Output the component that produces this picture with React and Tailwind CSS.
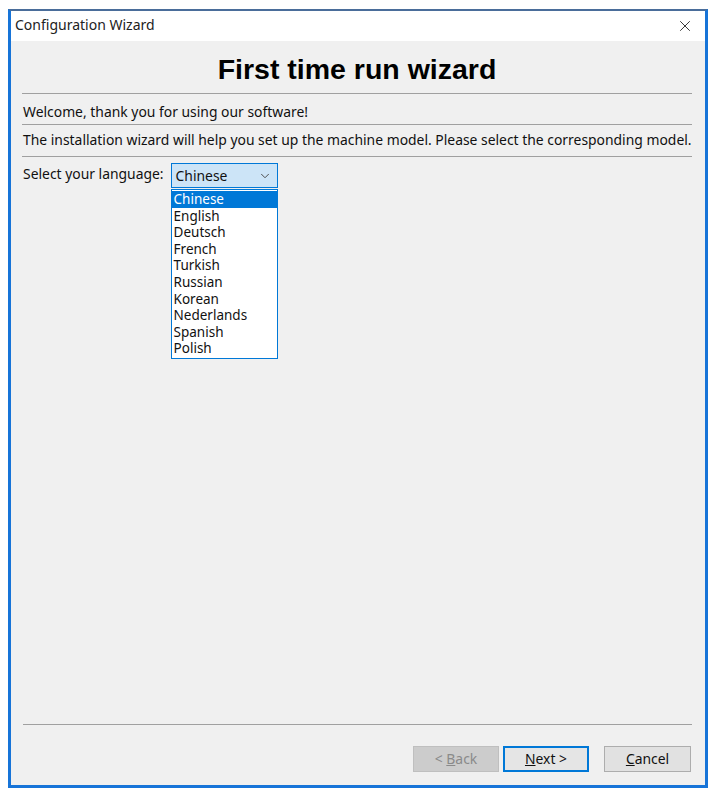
import { ChevronDown, X } from 'lucide-react';

const LANGUAGES = ['Chinese', 'English', 'Deutsch', 'French', 'Turkish', 'Russian', 'Korean', 'Nederlands', 'Spanish', 'Polish'];

export default function App() {
  return (
    <div className="w-[714px] h-[796px] bg-white pt-[9px] pl-[8px] font-['Noto_Sans',sans-serif] text-[13.9px] text-[#111]">
      {/* window */}
      <div className="w-[700px] h-[779px] flex flex-col border-x-[3px] border-b-[3px] border-t-[2px] border-x-[#1774d8] border-b-[#1774d8] border-t-[#4a6d9a] bg-[#f0f0f0]">
        {/* title bar */}
        <div className="h-[30px] bg-white flex items-center justify-between pl-[4px] pr-[11px] pb-[3px] shrink-0">
          <span className="text-[14px] text-[#222] leading-none">Configuration Wizard</span>
          <X size={18} strokeWidth={1.3} className="text-[#333] mt-[2px]" />
        </div>

        {/* body */}
        <div className="flex-1 flex flex-col pl-[11px] pr-[13px] pb-[13px]">
          <h1 className="h-[52px] flex items-center justify-center font-['Liberation_Sans',sans-serif] font-bold text-[28.5px] text-black pt-[4px]">
            First time run wizard
          </h1>
          <div className="h-px bg-[#a0a0a0]" />
          <p className="h-[30px] flex items-center pl-px pt-[6px]">Welcome, thank you for using our software!</p>
          <div className="h-px bg-[#a0a0a0]" />
          <p className="h-[31px] flex items-center pl-px whitespace-nowrap">
            The installation wizard will help you set up the machine model. Please select the corresponding model.
          </p>
          <div className="h-px bg-[#a0a0a0]" />

          <div className="flex items-start pt-[6px] pl-px">
            <span className="mt-[1px] mr-[7px]">Select your language:</span>
            <div className="relative">
              <div className="w-[107px] h-[25px] border border-[#0078d7] bg-[#cce4f7] flex items-center justify-between pl-[4px] pr-[5px]">
                <span className="mt-[2px]">Chinese</span>
                <ChevronDown size={14} strokeWidth={1.6} className="text-[#444]" />
              </div>
              <ul className="absolute left-0 top-[26px] w-[107px] border border-[#0078d7] bg-white py-px text-[13.5px]">
                {LANGUAGES.map((lang, i) => (
                  <li
                    key={lang}
                    className={
                      i === 0
                        ? 'h-[16.6px] leading-[16.6px] px-[2px] bg-[#0078d7] text-white'
                        : 'h-[16.6px] leading-[16.6px] px-[2px] text-[#111]'
                    }
                  >
                    {lang}
                  </li>
                ))}
              </ul>
            </div>
          </div>

          <div className="flex-1" />

          <div className="h-px bg-[#a0a0a0] ml-px" />
          <div className="flex justify-end items-center pt-[21px] pr-[1px]">
            <button className="w-[86px] h-[26px] bg-[#cccccc] border border-[#bfbfbf] text-[#8a8a8a]">
              &lt; <span className="underline">B</span>ack
            </button>
            <button className="w-[86px] h-[26px] ml-[4px] bg-[#e5e5e5] border-2 border-[#0078d7] text-[#111]">
              <span className="underline">N</span>ext &gt;
            </button>
            <button className="w-[87px] h-[26px] ml-[15px] bg-[#e1e1e1] border border-[#adadad] text-[#111]">
              <span className="underline">C</span>ancel
            </button>
          </div>
        </div>
      </div>
    </div>
  );
}
